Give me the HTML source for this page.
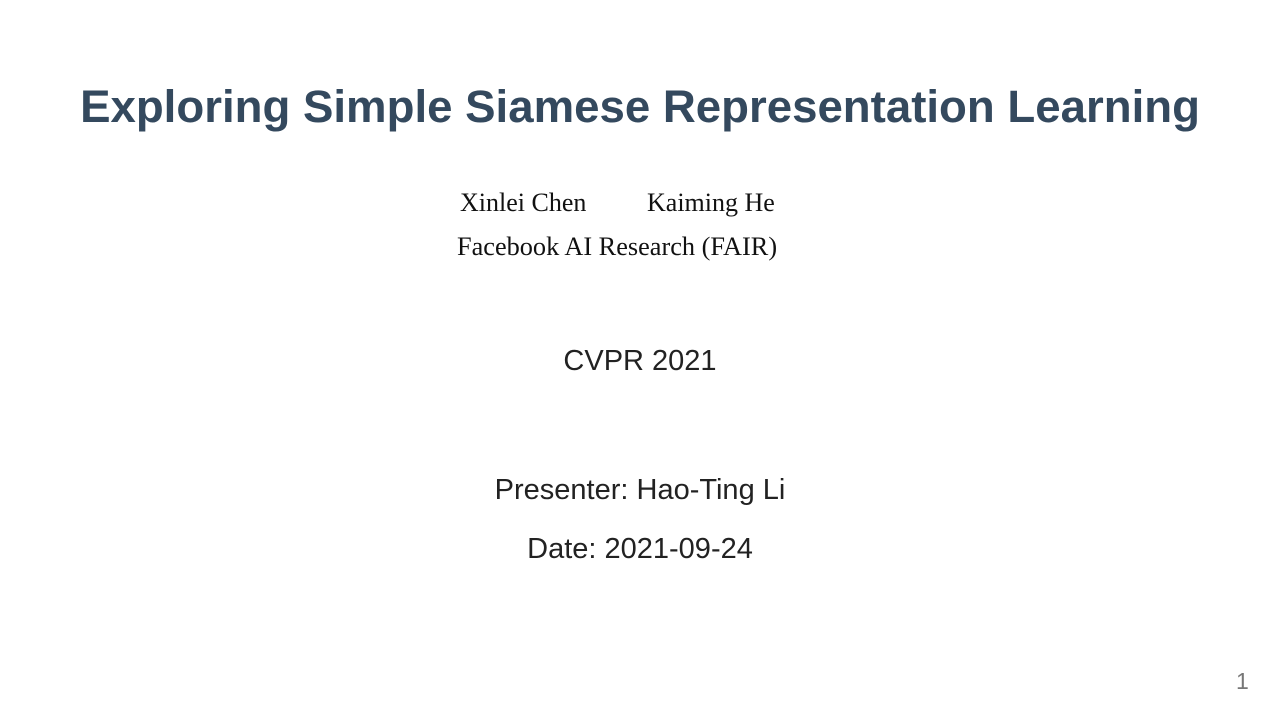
<!DOCTYPE html>
<html><head><meta charset="utf-8"><style>
body{margin:0;width:1280px;height:720px;background:#fff;position:relative;overflow:hidden;font-family:"Liberation Sans",sans-serif}
.t{position:absolute;left:0;width:1280px;text-align:center;white-space:nowrap}
.s{font-family:"Liberation Serif",serif;color:#111;font-size:26px;position:absolute;white-space:nowrap}
</style></head><body>
<div class="t" style="top:78px;font-size:45.6px;font-weight:bold;color:#34495e;line-height:58px">Exploring Simple Siamese Representation Learning</div>
<div class="s" style="left:460px;top:188px">Xinlei Chen</div>
<div class="s" style="left:647px;top:188px">Kaiming He</div>
<div class="s" style="left:457px;top:232px;font-size:26.3px">Facebook AI Research (FAIR)</div>
<div class="t" style="top:344px;font-size:29px;color:#222;line-height:34px">CVPR 2021</div>
<div class="t" style="top:473px;font-size:29px;color:#222;line-height:34px">Presenter: Hao-Ting Li</div>
<div class="t" style="top:532px;font-size:29px;color:#222;line-height:34px">Date: 2021-09-24</div>
<div style="position:absolute;left:1236px;top:668px;font-size:23px;color:#777">1</div>
</body></html>
